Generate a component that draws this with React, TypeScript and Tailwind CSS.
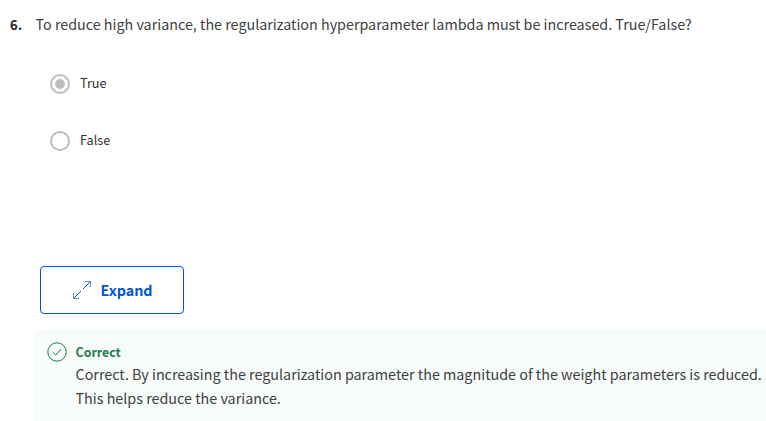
function Radio({ checked, label }: { checked?: boolean; label: string }) {
  return (
    <label className="flex h-5 items-center gap-2.5">
      <span className="flex size-5 items-center justify-center rounded-full border-2 border-[#bdbdbd]">
        {checked && <span className="size-2.5 rounded-full bg-[#bdbdbd]" />}
      </span>
      <span className="-mt-0.5 text-[12.7px] leading-5 text-[#333]">{label}</span>
    </label>
  );
}

export default function App() {
  return (
    <main className="h-[421px] w-full overflow-hidden bg-white font-['Noto_Sans_CJK_SC','Noto_Sans',sans-serif] whitespace-nowrap text-[#1f1f1f]">
      <div className="flex h-[74px] pt-3 pl-2.5 leading-6">
        <span className="w-[25.5px] pt-px text-[13px] font-bold tracking-[0.4px]">6.</span>
        <p className="text-[14.32px] text-[#404040]">
          To reduce high variance, the regularization hyperparameter lambda must be increased. True/False?
        </p>
      </div>
      <div className="flex h-48 flex-col gap-[37px] pl-[50px]">
        <Radio checked label="True" />
        <Radio label="False" />
      </div>
      <button className="ml-10 flex h-12 w-36 items-center rounded-[4px] border border-[#0056d2] pl-8 text-[#0056d2]">
        <svg className="size-[18px]" viewBox="0 0 18 18" fill="none" stroke="currentColor" strokeWidth="1">
          <path d="m10 8 7.3-7.3M8 10 .7 17.3" />
          <path d="M12 .5h5.5V6M.5 12v5.5H6" strokeOpacity="0.65" />
        </svg>
        <span className="-mt-px ml-[9.5px] text-[14.3px] font-bold">Expand</span>
      </button>
      <section className="mt-4 ml-[35px] flex h-[91px] bg-[#f7fbf9] pt-3 pl-3">
        <svg className="size-5 shrink-0 text-[#1d7c50]" viewBox="0 0 20 20" fill="none" stroke="currentColor" strokeWidth="1">
          <circle cx="10" cy="10" r="9.2" />
          <path d="m5.8 10.2 3 2.9 5.3-6.1" />
        </svg>
        <div className="ml-[8.5px]">
          <h2 className="text-[12.4px] leading-5 font-bold text-[#1d7c50]">Correct</h2>
          <p className="text-[14.33px] leading-6 text-[#404040]">
            Correct. By increasing the regularization parameter the magnitude of the weight parameters is reduced.
            <br />
            This helps reduce the variance.
          </p>
        </div>
      </section>
    </main>
  );
}
